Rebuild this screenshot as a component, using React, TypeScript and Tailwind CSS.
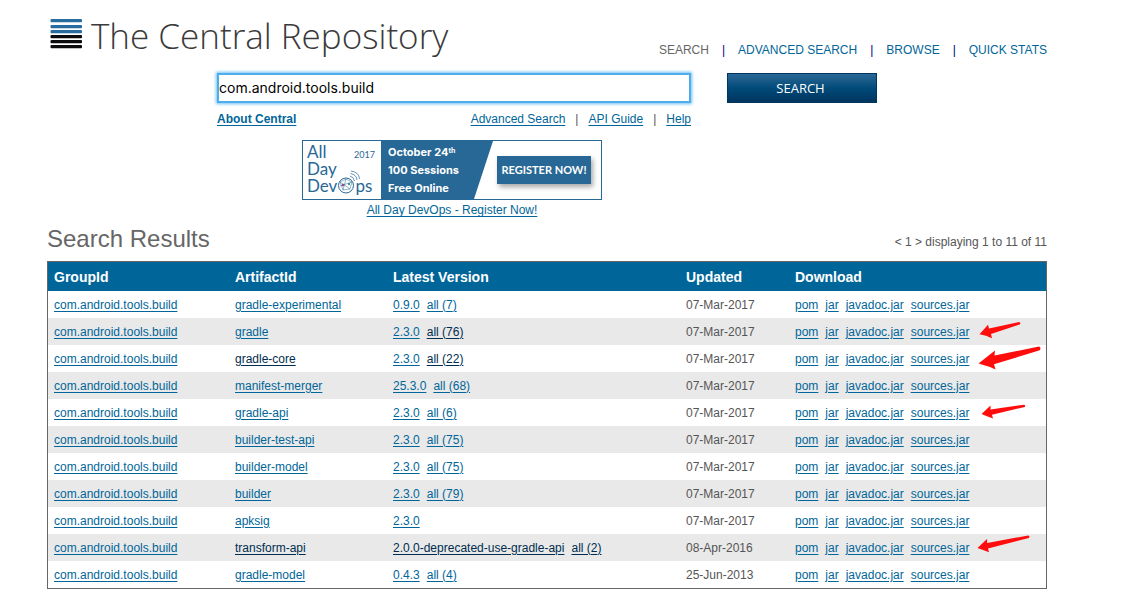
import React from 'react';

type Arrow = { place: string; path: string; size: string; box: string };

type Row = {
  artifact: string;
  version: string;
  all?: number;
  date: string;
  visited?: 'all' | 'artifact' | 'both';
  arrow?: Arrow;
};

const rows: Row[] = [
  { artifact: 'gradle-experimental', version: '0.9.0', all: 7, date: '07-Mar-2017' },
  {
    artifact: 'gradle', version: '2.3.0', all: 76, date: '07-Mar-2017', visited: 'all',
    arrow: {
      place: 'left-[190px] top-[3px]', size: 'h-[20px] w-[44px]', box: '0 0 44 20',
      path: 'M0.5 13.3 L9 3.8 L10 7.6 L40 1 Q42 1.3 41 3.3 L12 13 L13 17.3 L7 14.8 Z',
    },
  },
  {
    artifact: 'gradle-core', version: '2.3.0', all: 22, date: '07-Mar-2017', visited: 'artifact',
    arrow: {
      place: 'left-[189px] top-0', size: 'h-[26px] w-[66px]', box: '0 0 66 26',
      path: 'M0.5 18.5 L17 5.5 L16.5 10.5 L61 1.6 Q63.5 2.5 61.8 5.3 L16 19.3 L17.5 24.5 L12 22 Z',
    },
  },
  { artifact: 'manifest-merger', version: '25.3.0', all: 68, date: '07-Mar-2017' },
  {
    artifact: 'gradle-api', version: '2.3.0', all: 6, date: '07-Mar-2017',
    arrow: {
      place: 'left-[192px] top-[4px]', size: 'h-[18px] w-[48px]', box: '0 0 48 18',
      path: 'M0.5 10.9 L9.5 2.5 L9.5 6.5 L43 1.7 Q45 2.2 43.8 4 L11 11.8 L12 15.5 L6 13.3 Z',
    },
  },
  { artifact: 'builder-test-api', version: '2.3.0', all: 75, date: '07-Mar-2017' },
  { artifact: 'builder-model', version: '2.3.0', all: 75, date: '07-Mar-2017' },
  { artifact: 'builder', version: '2.3.0', all: 79, date: '07-Mar-2017' },
  { artifact: 'apksig', version: '2.3.0', date: '07-Mar-2017' },
  {
    artifact: 'transform-api', version: '2.0.0-deprecated-use-gradle-api', all: 2, date: '08-Apr-2016', visited: 'both',
    arrow: {
      place: 'left-[188px] top-0', size: 'h-[20px] w-[56px]', box: '0 0 56 20',
      path: 'M0.5 14 L10 5 L10.2 9 L51.3 1.4 Q53.3 2 51.8 4 L11 14.4 L12 18.2 L6 16 Z',
    },
  },
  { artifact: 'gradle-model', version: '0.4.3', all: 4, date: '25-Jun-2013' },
];

const files = ['pom', 'jar', 'javadoc.jar', 'sources.jar'];

function TextLink({ children, dark = false }: { children: React.ReactNode; dark?: boolean }) {
  return (
    <a href="#" className={`underline underline-offset-2 ${dark ? 'text-[#002d4f]' : 'text-[#006699]'}`}>
      {children}
    </a>
  );
}

function Logo() {
  return (
    <a href="#" className="flex items-start gap-[9px] pl-[3px] text-[#3a3a3a]">
      <svg viewBox="0 0 32 32" className="mt-[6px] h-8 w-8 shrink-0" aria-hidden="true">
        {[1, 7, 12, 17, 22, 27].map((y, i) => (
          <rect key={y} x="0.5" y={y} width="31.5" height="3.3" rx="1" fill={i < 3 ? '#286d9f' : '#0b0b0d'} />
        ))}
      </svg>
      <span className="whitespace-nowrap font-['Open_Sans','Noto_Sans',sans-serif] text-[35px] leading-[48px] font-light">
        The Central Repository
      </span>
    </a>
  );
}

function Banner() {
  return (
    <a href="#" className="flex h-[60px] w-[300px] border border-[#286896] bg-white font-['Lato',sans-serif] text-[#286896]">
      <div className="flex w-[78px] flex-col pt-[2px] pl-1 text-[17px] leading-[17px]">
        <div className="flex h-[17px] justify-between pr-[6px]">
          <span>All</span>
          <span className="pt-[3px] text-[9px]">2017</span>
        </div>
        <div className="h-[17px]">Day</div>
        <div className="flex h-[17px] items-end">
          <span>Dev</span>
          <svg viewBox="0 0 18 26" className="h-[26px] w-[18px] shrink-0 overflow-visible" fill="none" stroke="currentColor" aria-hidden="true">
            <circle cx="9" cy="17.5" r="7.5" strokeWidth="1" />
            <path d="M3 14 L9 11 L15 14 L13 21 L6 22 L3 14 L13 21 M9 11 L6 22 M15 14 L3 18" strokeWidth="0.5" />
            <circle cx="6" cy="17" r="1.2" fill="#a33d86" stroke="none" />
            <circle cx="12" cy="16" r="1.2" fill="#3c9b86" stroke="none" />
            <path d="M13 8 Q17 9 17.5 13 M13.5 5.5 Q19.5 6.5 20 12 M14 3 Q22 4 22.5 11" strokeWidth="0.7" />
          </svg>
          <span>ps</span>
        </div>
      </div>
      <div className="w-[112px] bg-[#286896] pt-[2px] pl-[7px] font-['Inter',sans-serif] text-[11px] leading-[18px] font-bold text-white [clip-path:polygon(0_0,100%_0,93px_100%,0_100%)]">
        <div className="h-[18px]">October 24<sup className="text-[7px]">th</sup></div>
        <div className="h-[18px]">100 Sessions</div>
        <div className="h-[18px]">Free Online</div>
      </div>
      <div className="flex flex-1 items-center pl-1">
        <span className="flex h-7 w-[94px] items-center justify-center whitespace-nowrap bg-[#286896] text-[11px] font-bold text-white shadow-[2px_3px_5px_rgba(0,0,0,0.35)]">
          REGISTER NOW!
        </span>
      </div>
    </a>
  );
}

const cell = 'pl-[6px] text-left whitespace-nowrap';

export default function App() {
  return (
    <div className="min-h-screen bg-white pr-[88px] pb-[15px] pl-[47px] font-['Liberation_Sans',Arial,sans-serif] text-[12px] leading-4 text-[#555555]">
      <header className="flex items-start justify-between pt-3">
        <Logo />
        <nav className="flex items-center gap-[13px] pt-[30px]">
          <a href="#" className="text-[#666666]">SEARCH</a>
          <span className="text-[#000080]">|</span>
          <a href="#" className="text-[#006699]">ADVANCED SEARCH</a>
          <span className="text-[#000080]">|</span>
          <a href="#" className="text-[#006699]">BROWSE</a>
          <span className="text-[#000080]">|</span>
          <a href="#" className="text-[#006699]">QUICK STATS</a>
        </nav>
      </header>

      <form className="flex items-start gap-9 pt-[13px] pr-[170px] pl-[170px]" onSubmit={(e) => e.preventDefault()}>
        <div className="min-w-0 flex-1">
          <input
            type="text"
            aria-label="Search"
            defaultValue="com.android.tools.build"
            className="block h-[30px] w-full border-2 border-[#4fadea] bg-white px-0 pb-[2px] font-['Inter',sans-serif] text-[14px] text-black shadow-[0_0_3px_1px_#6cc0f5] outline-none"
          />
          <div className="flex justify-between pt-2">
            <a href="#" className="font-bold text-[#006699] underline underline-offset-2">About Central</a>
            <div className="flex gap-[10px]">
              <TextLink>Advanced Search</TextLink>
              <span>|</span>
              <TextLink>API Guide</TextLink>
              <span>|</span>
              <TextLink>Help</TextLink>
            </div>
          </div>
        </div>
        <button
          type="submit"
          className="h-[30px] w-[150px] border border-[#003660] bg-linear-to-b from-[#286896] via-[#004b7a] to-[#00355f] pr-[3px] font-['Open_Sans',sans-serif] text-[13px] text-white"
        >
          SEARCH
        </button>
      </form>

      <div className="flex flex-col items-center gap-[2px] pt-[13px] pr-[190px]">
        <Banner />
        <TextLink>All Day DevOps - Register Now!</TextLink>
      </div>

      <div className="flex items-start justify-between pt-[5px]">
        <h1 className="text-[24px] leading-8 text-[#666666]">Search Results</h1>
        <p className="pt-[11px]">&lt; 1 &gt; displaying 1 to 11 of 11</p>
      </div>

      <table className="mt-[6px] w-full table-fixed border-separate border-spacing-0 border border-[#666666]">
        <thead>
          <tr className="h-[29px] bg-[#006699] text-[14px] text-white">
            <th scope="col" className={`${cell} w-[181px]`}>GroupId</th>
            <th scope="col" className={`${cell} w-[158px]`}>ArtifactId</th>
            <th scope="col" className={`${cell} w-[293px]`}>Latest Version</th>
            <th scope="col" className={`${cell} w-[109px]`}>Updated</th>
            <th scope="col" className={cell}>Download</th>
          </tr>
        </thead>
        <tbody>
          {rows.map((row) => (
            <tr key={row.artifact} className="h-[27px] even:bg-[#e9e9e9]">
              <td className={cell}><TextLink>com.android.tools.build</TextLink></td>
              <td className={cell}>
                <TextLink dark={row.visited === 'artifact' || row.visited === 'both'}>{row.artifact}</TextLink>
              </td>
              <td className={cell}>
                <div className="flex gap-[7px]">
                  <TextLink dark={row.visited === 'both'}>{row.version}</TextLink>
                  {row.all !== undefined && <TextLink dark={row.visited !== undefined}>all ({row.all})</TextLink>}
                </div>
              </td>
              <td className={cell}>{row.date}</td>
              <td className={`${cell} relative`}>
                <div className="flex gap-[7px]">
                  {files.map((file) => <TextLink key={file}>{file}</TextLink>)}
                </div>
                {row.arrow && (
                  <svg viewBox={row.arrow.box} className={`absolute ${row.arrow.place} ${row.arrow.size}`} aria-hidden="true">
                    <path d={row.arrow.path} fill="#ff0d0d" />
                  </svg>
                )}
              </td>
            </tr>
          ))}
        </tbody>
      </table>
    </div>
  );
}
